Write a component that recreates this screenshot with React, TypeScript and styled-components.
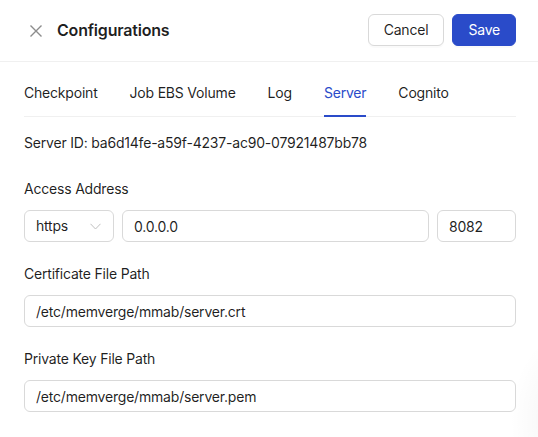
import React from 'react';
import styled, { createGlobalStyle } from 'styled-components';

const GlobalStyle = createGlobalStyle`
  html, body {
    margin: 0;
    padding: 0;
    background: #fff;
  }
  body {
    font-family: Inter, "Noto Sans", sans-serif;
    color: rgba(0, 0, 0, 0.88);
    letter-spacing: -0.2px;
    -webkit-font-smoothing: antialiased;
  }
  * {
    box-sizing: border-box;
  }
`;

const Drawer = styled.div`
  position: relative;
  width: 538px;
  height: 437px;
  overflow: hidden;
  background:
    radial-gradient(ellipse 60px 90px at 570px 420px, rgba(0, 0, 0, 0.06) 0, rgba(0, 0, 0, 0.02) 60%, rgba(0, 0, 0, 0) 100%),
    #fff;
`;

const Header = styled.header`
  height: 62px;
  display: flex;
  align-items: center;
  padding: 0 22px 0 29px;
  border-bottom: 1px solid #f0f0f0;
`;

const CloseButton = styled.button`
  width: 14px;
  height: 14px;
  padding: 0;
  border: 0;
  background: none;
  display: flex;
  align-items: center;
  justify-content: center;
  margin-right: 14px;
  cursor: pointer;
`;

const Title = styled.h1`
  flex: 1;
  margin: 0;
  font-size: 16px;
  font-weight: 600;
  line-height: 24px;
  color: rgba(0, 0, 0, 0.88);
  margin-top: -2px;
`;

const Actions = styled.div`
  display: flex;
  gap: 8px;
  margin-top: -2px;
`;

const Button = styled.button<{ $primary?: boolean }>`
  height: 32px;
  padding: 0 15px;
  border-radius: 6px;
  font-family: Inter, "Noto Sans", sans-serif;
  font-size: 14px;
  letter-spacing: -0.2px;
  line-height: 22px;
  cursor: pointer;
  border: 1px solid ${p => (p.$primary ? '#2a4bc9' : '#d9d9d9')};
  background: ${p => (p.$primary ? '#2a4bc9' : '#fff')};
  color: ${p => (p.$primary ? '#fff' : 'rgba(0, 0, 0, 0.88)')};
  box-shadow: 0 2px 0 rgba(0, 0, 0, 0.02);
`;

const Body = styled.div`
  padding: 8px 22px 0 24px;
`;

const TabList = styled.div`
  display: flex;
  gap: 32px;
  border-bottom: 1px solid #f0f0f0;
`;

const Tab = styled.div<{ $active?: boolean }>`
  position: relative;
  padding: 12px 0;
  font-size: 14px;
  line-height: 22px;
  color: ${p => (p.$active ? '#2a4bc9' : 'rgba(0, 0, 0, 0.88)')};
  cursor: pointer;

  &::after {
    content: '';
    position: absolute;
    left: 0;
    right: 0;
    bottom: -1px;
    height: 2px;
    background: ${p => (p.$active ? '#2a4bc9' : 'transparent')};
  }
`;

const ServerId = styled.div`
  margin-top: 15px;
  font-size: 14px;
  line-height: 22px;
`;

const Form = styled.div`
  margin-top: 24px;
  display: flex;
  flex-direction: column;
  gap: 21px;
`;

const Field = styled.div`
  display: flex;
  flex-direction: column;
`;

const Label = styled.label`
  font-size: 14px;
  line-height: 22px;
  margin-bottom: 10px;
`;

const InputRow = styled.div`
  display: flex;
  gap: 8px;
`;

const Input = styled.input<{ $width?: number; $grow?: boolean }>`
  height: 32px;
  flex: none;
  padding: 4px 11px;
  border: 1px solid #d9d9d9;
  border-radius: 6px;
  font-family: Inter, "Noto Sans", sans-serif;
  font-size: 14px;
  letter-spacing: -0.2px;
  line-height: 22px;
  color: rgba(0, 0, 0, 0.88);
  background: #fff;
  outline: none;
  min-width: 0;
  width: ${p => (p.$width ? `${p.$width}px` : '100%')};
  ${p => (p.$grow ? 'flex: 1 1 0;' : '')}
`;

const Select = styled.div`
  width: 90px;
  height: 32px;
  flex: none;
  display: flex;
  align-items: center;
  justify-content: space-between;
  padding: 0 12px 0 11px;
  border: 1px solid #d9d9d9;
  border-radius: 6px;
  font-size: 14px;
  line-height: 22px;
`;

const tabs = ['Checkpoint', 'Job EBS Volume', 'Log', 'Server', 'Cognito'];

const App = () => {
  return (
    <>
      <GlobalStyle />
      <Drawer>
        <Header>
          <CloseButton aria-label="Close">
            <svg width="14" height="14" viewBox="0 0 14 14">
              <path d="M1.5 1.5 L12.5 12.5 M12.5 1.5 L1.5 12.5" stroke="#8c8c8c" strokeWidth="1.4" fill="none" />
            </svg>
          </CloseButton>
          <Title>Configurations</Title>
          <Actions>
            <Button>Cancel</Button>
            <Button $primary>Save</Button>
          </Actions>
        </Header>

        <Body>
          <TabList>
            {tabs.map(t => (
              <Tab key={t} $active={t === 'Server'}>{t}</Tab>
            ))}
          </TabList>

          <ServerId>Server ID: ba6d14fe-a59f-4237-ac90-07921487bb78</ServerId>

          <Form>
            <Field>
              <Label>Access Address</Label>
              <InputRow>
                <Select>
                  <span>https</span>
                  <svg width="11" height="7" viewBox="0 0 11 7">
                    <path d="M0.5 0.8 L5.5 6 L10.5 0.8" stroke="#bfbfbf" strokeWidth="1" fill="none" />
                  </svg>
                </Select>
                <Input $grow defaultValue="0.0.0.0" />
                <Input $width={79} defaultValue="8082" />
              </InputRow>
            </Field>

            <Field>
              <Label>Certificate File Path</Label>
              <Input defaultValue="/etc/memverge/mmab/server.crt" />
            </Field>

            <Field>
              <Label>Private Key File Path</Label>
              <Input defaultValue="/etc/memverge/mmab/server.pem" />
            </Field>
          </Form>
        </Body>
      </Drawer>
    </>
  );
};

export default App;
